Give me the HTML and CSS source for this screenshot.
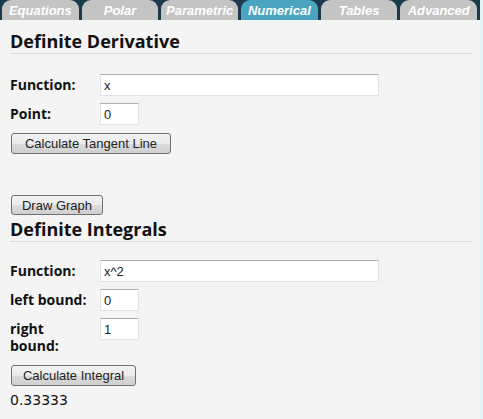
FILE: index.html
```html
<!DOCTYPE html>
<html>
<head>
<meta charset="utf-8">
<link rel="stylesheet" href="styles.css">
</head>
<body>
<div class="frame">
  <nav class="tabs">
    <div class="tab">Equations</div>
    <div class="tab">Polar</div>
    <div class="tab">Parametric</div>
    <div class="tab active">Numerical</div>
    <div class="tab">Tables</div>
    <div class="tab">Advanced</div>
  </nav>
  <main class="panel">
    <h2 class="section-title first">Definite Derivative</h2>
    <div class="field f-first">
      <label class="label">Function:</label>
      <input class="input wide" type="text" value="x">
    </div>
    <div class="field">
      <label class="label">Point:</label>
      <input class="input short" type="text" value="0">
    </div>
    <button class="btn btn-tangent">Calculate Tangent Line</button>
    <div class="graph-space"></div>
    <button class="btn btn-graph">Draw Graph</button>

    <h2 class="section-title second">Definite Integrals</h2>
    <div class="field f-first2">
      <label class="label">Function:</label>
      <input class="input wide" type="text" value="x^2">
    </div>
    <div class="field">
      <label class="label">left bound:</label>
      <input class="input short" type="text" value="0">
    </div>
    <div class="field">
      <label class="label">right bound:</label>
      <input class="input short" type="text" value="1">
    </div>
    <button class="btn btn-integral">Calculate Integral</button>
    <div class="result">0.33333</div>
  </main>
</div>
</body>
</html>
```

FILE: styles.css
```css
html, body {
  margin: 0;
  padding: 0;
}
body {
  background: #f4f4f4;
  font-family: "Open Sans", "DejaVu Sans", sans-serif;
  color: #111;
}
.frame {
  width: 480px;
  height: 419px;
  border-right: 3px solid #e4f3f6;
  background: #f4f4f4;
}
.tabs {
  display: flex;
  gap: 3px;
  height: 20px;
  padding: 0 3px 0 2px;
  background: #1c3a4e;
}
.tab {
  flex: 1;
  background: #c4c4c4;
  border-radius: 9px 9px 0 0;
  color: #fff;
  font-family: "Liberation Sans", Arial, sans-serif;
  font-weight: bold;
  font-style: italic;
  font-size: 13px;
  line-height: 22px;
  text-align: center;
  height: 20px;
  overflow: hidden;
}
.tab.active {
  background: #4aa6c0;
}
.panel {
  padding: 0 8px 0 10px;
}
.section-title {
  margin: 0;
  font-size: 18px;
  line-height: 22px;
  font-weight: bold;
  padding-bottom: 1px;
  border-bottom: 1px solid #dcdcdc;
}
.section-title.first {
  margin-top: 10px;
}
.section-title.second {
  margin-top: 3px;
}
.field {
  display: flex;
  align-items: baseline;
  margin-top: 7px;
}
.field.f-first {
  margin-top: 20px;
}
.field.f-first2 {
  margin-top: 18px;
}
.label {
  flex: 0 0 82px;
  margin-right: 8px;
  font-size: 14px;
  font-weight: bold;
  line-height: 17px;
}
.input {
  box-sizing: border-box;
  height: 22px;
  margin: 0;
  padding: 1px 3px;
  border: 1px solid #e2e3ea;
  border-top-color: #abadb3;
  background: #fff;
  font-family: "Liberation Sans", Arial, sans-serif;
  font-size: 13px;
  color: #222;
  outline: none;
}
.input.wide {
  width: 279px;
}
.input.short {
  width: 39px;
}
.btn {
  display: block;
  box-sizing: border-box;
  height: 21px;
  margin: 8px 0 0 1px;
  padding: 0 9px;
  border: 1px solid #707070;
  border-radius: 3px;
  background: linear-gradient(#f2f2f2 0%, #ebebeb 50%, #dddddd 51%, #cfcfcf 100%);
  font-family: "Liberation Sans", Arial, sans-serif;
  font-size: 13px;
  color: #222;
}
.btn-tangent {
  width: 160px;
}
.graph-space {
  height: 41px;
}
.btn-graph {
  margin-top: 0;
  width: 92px;
  height: 20px;
}
.btn-integral {
  width: 125px;
  margin-top: 11px;
}
.result {
  margin-top: 5px;
  font-size: 14px;
  line-height: 18px;
  font-family: "DejaVu Sans", sans-serif;
}
```
